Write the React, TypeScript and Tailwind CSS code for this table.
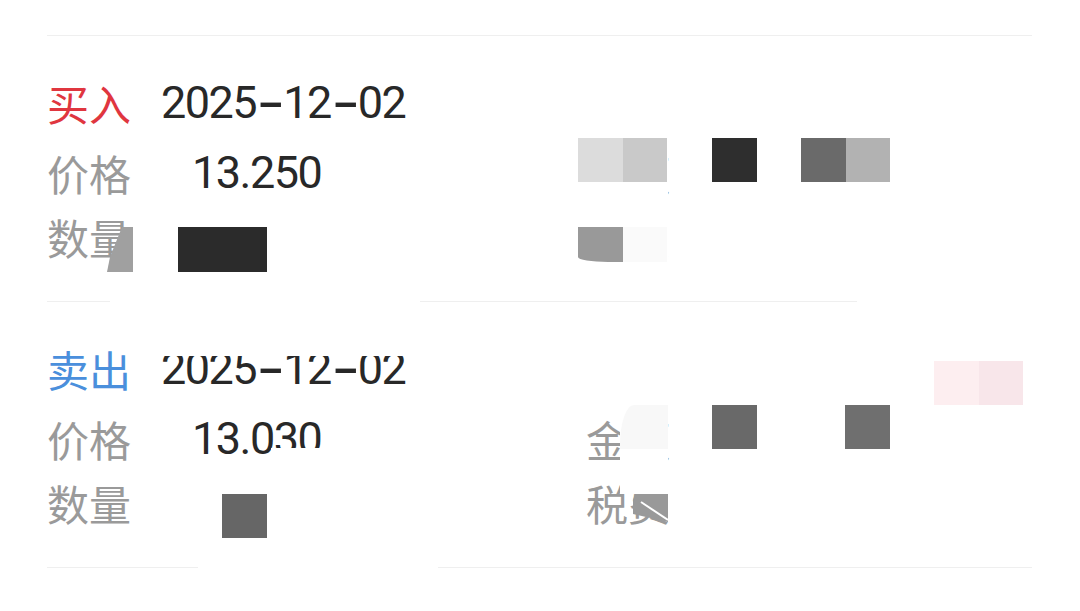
import React from 'react';

interface Trade {
  side: string;
  sideColor: string;
  date: string;
  price: string;
}

const trades: Trade[] = [
  { side: '买入', sideColor: 'text-[#e0363f]', date: '2025-12-02', price: '13.250' },
  { side: '卖出', sideColor: 'text-[#4a8fdc]', date: '2025-12-02', price: '13.030' },
];

const cjk = "font-['Noto_Sans_CJK_SC','Noto_Sans',sans-serif]";
const num = "font-['Roboto','Noto_Sans',sans-serif] font-[450] text-[45px] tracking-[-1.5px] text-[#282828]";

// the date font in the app has dashes as wide as digits
function DateText({ value }: { value: string }) {
  return (
    <span className={num}>
      {value.split('-').map((part, i) => (
        <React.Fragment key={i}>
          {i > 0 && <span className="inline-block w-[27px] text-center scale-x-[1.9] scale-y-[1.3]">-</span>}
          {part}
        </React.Fragment>
      ))}
    </span>
  );
}

function TradeCard({ trade }: { trade: Trade }) {
  return (
    <div className="flex border-b border-[#efefef] pt-[44px] pb-[41px]">
      {/* left column */}
      <div className="flex w-[539px] flex-col">
        <div className="flex h-[46px] items-center">
          <span className={`${cjk} w-[114px] text-[42px] leading-[46px] ${trade.sideColor}`}>{trade.side}</span>
          <DateText value={trade.date} />
        </div>
        <div className="mt-[24px] flex h-[46px] items-center">
          <span className={`${cjk} w-[114px] text-[42px] leading-[46px] text-[#9a9a9a]`}>价格</span>
          <span className={`${num} pl-[31px]`}>{trade.price}</span>
        </div>
        <div className="mt-[18px] flex h-[46px] items-center">
          <span className={`${cjk} w-[114px] text-[42px] leading-[46px] text-[#9a9a9a]`}>数量</span>
        </div>
      </div>

      {/* right column */}
      <div className="flex flex-1 flex-col">
        <div className="h-[46px]" />
        <div className="mt-[24px] flex h-[46px] items-center">
          <span className={`${cjk} text-[42px] leading-[46px] text-[#9a9a9a]`}>金额</span>
        </div>
        <div className="mt-[18px] flex h-[46px] items-center">
          <span className={`${cjk} text-[42px] leading-[46px] text-[#9a9a9a]`}>税费</span>
        </div>
      </div>
    </div>
  );
}

// mosaic cells that redact the screenshot, laid over the content
function Mosaic() {
  return (
    <div className="pointer-events-none absolute inset-0">
      {/* card 1 */}
      <div className="absolute left-[578px] top-[138px] h-[134px] w-[90px] bg-white" />
      <div className="absolute left-[578px] top-[138px] h-[44px] w-[45px] bg-[#dcdcdc]" />
      <div className="absolute left-[623px] top-[138px] h-[44px] w-[44px] bg-[#c9c9c9]" />
      <div className="absolute left-[712px] top-[138px] h-[44px] w-[45px] bg-[#2e2e2e]" />
      <div className="absolute left-[801px] top-[138px] h-[44px] w-[45px] bg-[#6a6a6a]" />
      <div className="absolute left-[846px] top-[138px] h-[44px] w-[44px] bg-[#b2b2b2]" />
      <div className="absolute left-[578px] top-[227px] h-[35px] w-[45px] rounded-bl-[30px_5px] bg-[#999999]" />
      <div className="absolute left-[623px] top-[227px] h-[35px] w-[44px] bg-[#fafafa]" />
      <div className="absolute left-[178px] top-[227px] h-[45px] w-[89px] bg-[#2b2b2b]" />
      <svg className="absolute left-[107px] top-[227px]" width="26" height="45" viewBox="0 0 26 45">
        <polygon points="15,0 26,0 26,45 0,45 3,30" fill="#a0a0a0" />
      </svg>
      <div className="absolute left-[110px] top-[298px] h-[6px] w-[310px] bg-white" />
      <div className="absolute left-[857px] top-[298px] h-[6px] w-[175px] bg-white" />

      {/* card 2 */}
      <div className="absolute left-[160px] top-[316px] h-[40px] w-[250px] bg-white" />
      <div className="absolute left-[271px] top-[448px] h-[16px] w-[60px] bg-white" />
      <div className="absolute left-[222px] top-[494px] h-[44px] w-[45px] bg-[#666666]" />
      <div className="absolute left-[620px] top-[405px] h-[89px] w-[48px] bg-white" />
      <div className="absolute left-[620px] top-[405px] h-[44px] w-[48px] rounded-tl-[14px_40px] bg-[#f8f8f8]" />
      <div className="absolute left-[712px] top-[405px] h-[44px] w-[45px] bg-[#696969]" />
      <div className="absolute left-[845px] top-[405px] h-[44px] w-[45px] bg-[#6f6f6f]" />
      <div className="absolute left-[934px] top-[361px] h-[44px] w-[45px] bg-[#fdeef0]" />
      <div className="absolute left-[979px] top-[361px] h-[44px] w-[44px] bg-[#f8e6ea]" />
      <svg className="absolute left-[633px] top-[494px]" width="35" height="28" viewBox="0 0 35 28">
        <polygon points="2,0 35,0 35,28 0,20 0,6" fill="#999999" />
        <line x1="8" y1="8" x2="35" y2="26" stroke="#ffffff" strokeWidth="2" />
      </svg>
      <div className="absolute left-[198px] top-[564px] h-[6px] w-[240px] bg-white" />
    </div>
  );
}

export default function App() {
  return (
    <div className="relative min-h-screen overflow-hidden bg-white px-[47px] pt-[35px]">
      <div className="w-[985px] border-t border-[#efefef]">
        {trades.map((t) => (
          <TradeCard key={t.side} trade={t} />
        ))}
      </div>
      <Mosaic />
    </div>
  );
}
